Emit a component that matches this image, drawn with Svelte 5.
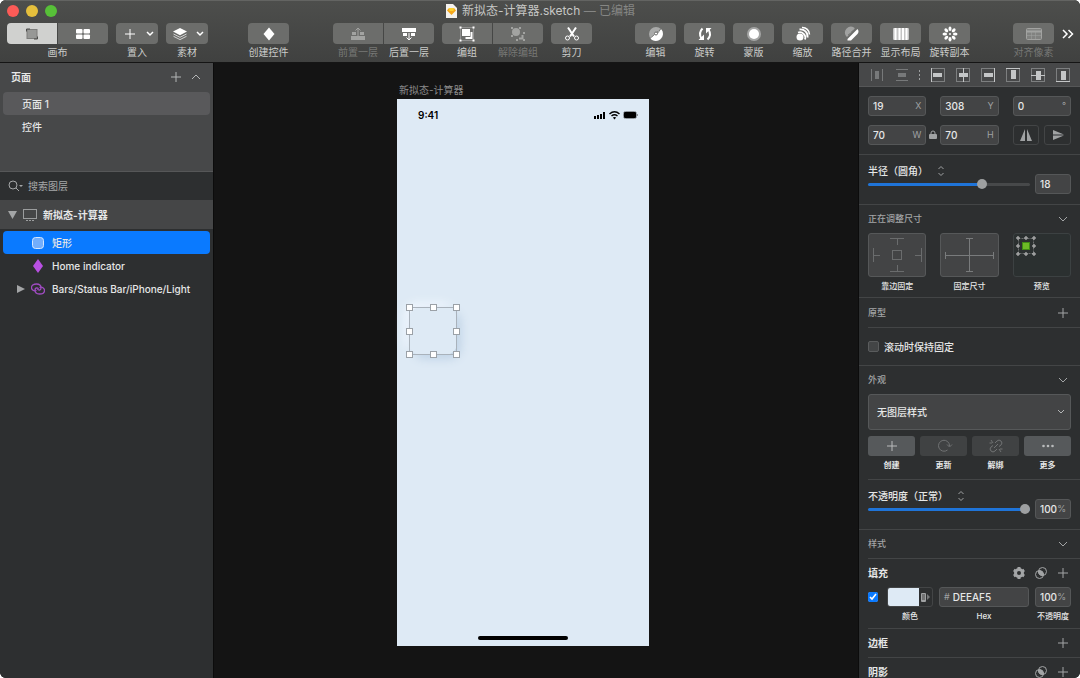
<script>
    // toolbar groups, the number in `space` is how much room is left before the group
    const toolGroups = [
        { space: 40, tools: [{ icon: 'symbol', label: '创建控件' }] },
        {
            space: 44,
            tools: [
                { icon: 'forward', label: '前置一层', side: 'left', off: true },
                { icon: 'backward', label: '后置一层', side: 'right' },
                { icon: 'group', label: '编组', side: 'left' },
                { icon: 'ungroup', label: '解除编组', side: 'right', off: true },
                { icon: 'scissors', label: '剪刀' }
            ]
        },
        {
            space: 43,
            tools: [
                { icon: 'edit', label: '编辑' },
                { icon: 'rotate', label: '旋转' },
                { icon: 'mask', label: '蒙版' },
                { icon: 'scale', label: '缩放' },
                { icon: 'flatten', label: '路径合并' },
                { icon: 'layout', label: '显示布局' },
                { icon: 'copies', label: '旋转副本' }
            ]
        },
        { space: 43, tools: [{ icon: 'pixel', label: '对齐像素', off: true }] }
    ];

    const aligns = ['left', 'center', 'right', 'top', 'middle', 'bottom'];

    const styleActions = [
        { icon: 'plus', label: '创建', on: true },
        { icon: 'refresh', label: '更新' },
        { icon: 'unlink', label: '解绑' },
        { icon: 'more', label: '更多', on: true }
    ];

    const handles = ['nw', 'n', 'ne', 'w', 'e', 'sw', 's', 'se'];

    let page = $state('页面 1');
    let layer = $state('矩形');
    let x = $state('19');
    let y = $state('308');
    let angle = $state('0');
    let w = $state('70');
    let h = $state('70');
    let radius = $state(18);
    let opacity = $state(100);
    let fillOn = $state(true);
    let sticky = $state(false);
    let hex = $state('DEEAF5');
    let fillOpacity = $state('100');
</script>

{#snippet icon(name)}
    <svg class="icon" width="18" height="16" viewBox="0 0 18 16" fill="none" stroke="currentColor" aria-hidden="true">
        {#if name === 'canvas'}
            <rect x="4" y="3.500" width="10" height="9" fill="#979896" stroke="#7c7d7b" />
            <path d="M3.500 5.500V3H7M14.500 10.500V13H11" stroke="#4c4d4b" />
        {:else if name === 'grid'}
            <g fill="currentColor" stroke="none">
                <rect x="2" y="3" width="6.500" height="4.500" rx="1" /><rect x="9.500" y="3" width="6.500" height="4.500" rx="1" />
                <rect x="2" y="8.500" width="6.500" height="4.500" rx="1" /><rect x="9.500" y="8.500" width="6.500" height="4.500" rx="1" />
            </g>
        {:else if name === 'plus'}
            <path d="M9 3v10M4 8h10" />
        {:else if name === 'stack'}
            <path d="M9 2l7 3.600L9 9.200 2 5.600z" fill="currentColor" stroke="none" />
            <path d="M2.500 8L9 11.300 15.500 8M2.500 10.300L9 13.600l6.500-3.300" stroke-opacity=".7" />
        {:else if name === 'symbol'}
            <path d="M9 1.500L14.500 8 9 14.500 3.500 8z" fill="currentColor" stroke="none" />
        {:else if name === 'forward'}
            <path d="M2 10h14v4H2zM3 6h4v3H3zM11 6h4v3h-4z" fill="currentColor" stroke="none" />
            <path d="M9 10V2M6.500 4.500L9 2l2.500 2.500" />
        {:else if name === 'backward'}
            <path d="M2 2h14v4H2zM3 7h4v3H3zM11 7h4v3h-4z" fill="currentColor" stroke="none" />
            <path d="M9 7v7M6.500 11.500L9 14l2.500-2.500" />
        {:else if name === 'group'}
            <rect x="2.500" y="1.500" width="13" height="13" stroke-dasharray="1 1" stroke-opacity=".5" />
            <path d="M4 3h8v7H4z" fill="currentColor" stroke="none" />
            <path d="M13.500 6v6h-6" stroke-width="2" />
            <path d="M1.500 .500h2v2h-2zM14.500 .500h2v2h-2zM1.500 13.500h2v2h-2zM14.500 13.500h2v2h-2z" fill="currentColor" stroke="none" />
        {:else if name === 'ungroup'}
            <path d="M2 1h2v2H2zM10 1h2v2h-2zM2 9h2v2H2zM7 13h2v2H7zM14 6h2v2h-2zM14 13h2v2h-2z" fill="currentColor" stroke="none" />
            <circle cx="7" cy="6" r="4" fill="currentColor" stroke="none" />
            <path d="M13.500 9v3.500H10" stroke-width="2" />
        {:else if name === 'scissors'}
            <path d="M5 1.500l6 9M13 1.500l-6 9" stroke-width="2" />
            <circle cx="4.500" cy="12" r="2" /><circle cx="13.500" cy="12" r="2" />
        {:else if name === 'edit'}
            <circle cx="9" cy="8" r="7" fill="#a9aaa9" stroke="none" />
            <path d="M14.500 3.500A7 7 0 0 1 3 12C6 12 6 8 9.500 8S12 4 14.500 3.500z" fill="currentColor" stroke="none" />
            <path d="M3 12.500L14.500 2.500" stroke="#6c6d6b" stroke-dasharray="2 1" />
            <circle cx="9" cy="7.500" r="1.500" fill="#fff" stroke="#6c6d6b" />
        {:else if name === 'rotate'}
            <path d="M6.500 2.500Q2 7 5.500 12.500M11.500 13.500q4.500-4.500 1-10" stroke-width="2" />
            <path d="M2.500 14H8V8.500zM15.500 2H10v5.500z" fill="currentColor" stroke="none" />
        {:else if name === 'mask'}
            <circle cx="9" cy="8" r="7" fill="#a4a5a4" stroke="none" /><circle cx="9" cy="8" r="5" fill="currentColor" stroke="none" />
        {:else if name === 'scale'}
            <circle cx="6" cy="11" r="3.500" fill="currentColor" stroke="none" />
            <path d="M4 6.500a5.500 5.500 0 0 1 7 7" stroke-width="1.800" />
            <path d="M5.500 3.500a7 7 0 0 1 8 8" stroke-width="1.800" />
            <path d="M8 1.500a7 7 0 0 1 7.500 7" stroke-width="1.500" />
        {:else if name === 'flatten'}
            <path d="M3 10a6 6 0 0 1 8-8.500l1 1-8 8.500z" fill="#a1a2a1" stroke="none" />
            <path d="M14.500 3q2 2.500 0 5L8 14.500H4.500V13z" fill="currentColor" stroke="none" />
            <path d="M5 9L12 2.500" stroke="#6c6d6b" stroke-dasharray="1 1" />
        {:else if name === 'layout'}
            <rect x="1" y="2" width="16" height="12" rx="1" fill="currentColor" fill-opacity=".6" stroke="none" />
            <path d="M3.500 2v12M7.500 2v12M11 2v12M14.500 2v12" stroke-width="2" />
        {:else if name === 'copies'}
            <g fill="currentColor" stroke="none">
                {#each [0, 45, 90, 135, 180, 225, 270, 315] as turn}
                    <ellipse cx="9" cy="2.800" rx="1.500" ry="2.300" transform="rotate({turn} 9 8)" />
                {/each}
                <circle cx="9" cy="8" r="1" />
            </g>
        {:else if name === 'pixel'}
            <rect x="1.500" y="2.500" width="15" height="11" rx="1" fill="currentColor" fill-opacity=".4" />
            <path d="M2 5.500h14" stroke-width="2" />
            <path d="M6.500 6v7M10.500 6v7M2 9.500h14" stroke-opacity=".5" />
        {:else if name === 'refresh'}
            <path d="M12.500 12A5.500 5.500 0 1 1 14.500 8M12 6.500L14.500 9 17 6.500" />
        {:else if name === 'unlink'}
            <path d="M8 5l2-2a2.500 2.500 0 0 1 4 4l-2 1.500M10 11l-2 2a2.500 2.500 0 0 1-4-4l2-1.500M4 2l2 3M2.500 5H5M14 14l-2-3M15.500 11H13M7 10l4-4" />
        {:else if name === 'more'}
            <g fill="currentColor" stroke="none"><circle cx="4.500" cy="8" r="1.300" /><circle cx="9" cy="8" r="1.300" /><circle cx="13.500" cy="8" r="1.300" /></g>
        {:else if name === 'gear'}
            <circle cx="9" cy="8" r="3.500" stroke-width="3" />
            <path d="M9 2v2M9 12v2M3.800 5l1.700 1M12.500 10l1.700 1M3.800 11l1.700-1M12.500 6l1.700-1" stroke-width="3" />
        {:else if name === 'blend'}
            <circle cx="7.500" cy="9.500" r="4" /><circle cx="10.500" cy="6.500" r="4" />
            <path d="M6.500 6a4 4 0 0 0 5 4.500A4 4 0 0 0 6.500 6z" fill="currentColor" />
        {:else if name === 'chevron'}
            <path d="M5 6l4 4 4-4" />
        {:else if name === 'chevron-up'}
            <path d="M5 10l4-4 4 4" />
        {:else if name === 'updown'}
            <path d="M6.500 6L9 3.500 11.500 6M6.500 10L9 12.500 11.500 10" />
        {:else if name === 'flip-h'}
            <path d="M8 2v12H3zM10 2v12h5z" fill="currentColor" stroke="none" />
        {:else if name === 'flip-v'}
            <path d="M4 3v4.500h11zM4 13V8.500h11z" fill="currentColor" stroke="none" />
        {/if}
    </svg>
{/snippet}

{#snippet alignIcon(name)}
    <svg width="16" height="16" viewBox="0 0 16 16" fill="none" stroke="#c4c6c7" aria-hidden="true">
        <rect x="1.500" y="1.500" width="13" height="13" stroke="#7d7f80" />
        {#if name === 'left'}
            <path d="M1.500 1v14" /><rect x="3" y="6" width="9" height="4" fill="#c4c6c7" stroke="none" />
        {:else if name === 'center'}
            <path d="M8.500 1v14" /><rect x="4" y="6" width="9" height="4" fill="#c4c6c7" stroke="none" />
        {:else if name === 'right'}
            <path d="M14.500 1v14" /><rect x="4" y="6" width="9" height="4" fill="#c4c6c7" stroke="none" />
        {:else if name === 'top'}
            <path d="M1 1.500h14" /><rect x="6" y="3" width="5" height="9" fill="#c4c6c7" stroke="none" />
        {:else if name === 'middle'}
            <path d="M1 8.500h14" /><rect x="6" y="4" width="5" height="9" fill="#c4c6c7" stroke="none" />
        {:else}
            <path d="M1 14.500h14" /><rect x="6" y="4" width="5" height="9" fill="#c4c6c7" stroke="none" />
        {/if}
    </svg>
{/snippet}

<div class="window">
    <header>
        <div class="titlebar">
            <div class="lights">
                <button class="light red" aria-label="关闭"></button>
                <button class="light yellow" aria-label="最小化"></button>
                <button class="light green" aria-label="全屏"></button>
            </div>
            <h1>
                <svg width="12" height="14" viewBox="0 0 12 14" aria-hidden="true">
                    <path d="M1 0h7l4 4v10H1z" fill="#f4f2ee" />
                    <path d="M4 4h5l2 2.500-4.500 4.500L2 6.500z" fill="#f6a81c" />
                    <path d="M4 4h5L8.500 7h-4z" fill="#fdd231" />
                </svg>
                <span>新拟态-计算器.sketch <span class="edited">— 已编辑</span></span>
            </h1>
            <div class="lights-end"></div>
        </div>

        <div class="toolbar">
            <div class="tools">
                <div class="tool views">
                    <div class="faces">
                        <button class="face left active" aria-label="画布">{@render icon('canvas')}</button>
                        <button class="face right" aria-label="控件">{@render icon('grid')}</button>
                    </div>
                    <span>画布</span>
                </div>
                <button class="tool drop">
                    <span class="face">
                        {@render icon('plus')}
                        <svg class="arrow" width="8" height="6" viewBox="0 0 8 6" aria-hidden="true"><path d="M1 1l3 3 3-3" /></svg>
                    </span>
                    <span>置入</span>
                </button>
                <button class="tool drop">
                    <span class="face">
                        {@render icon('stack')}
                        <svg class="arrow" width="8" height="6" viewBox="0 0 8 6" aria-hidden="true"><path d="M1 1l3 3 3-3" /></svg>
                    </span>
                    <span>素材</span>
                </button>
            </div>
            {#each toolGroups as group}
                <div class="space" style:flex-grow={group.space}></div>
                <div class="tools">
                    {#each group.tools as tool}
                        <button class="tool {tool.side ?? ''}" disabled={tool.off}>
                            <span class="face {tool.side ?? ''}">{@render icon(tool.icon)}</span>
                            <span>{tool.label}</span>
                        </button>
                    {/each}
                </div>
            {/each}
            <button class="overflow" aria-label="更多工具">
                <svg width="12" height="10" viewBox="0 0 12 10" aria-hidden="true"><path d="M1 1l4 4-4 4M6.500 1l4 4-4 4" /></svg>
            </button>
        </div>
    </header>

    <div class="body">
        <aside class="sidebar">
            <section class="pages">
                <div class="pages-head">
                    <h2>页面</h2>
                    <button aria-label="新建页面">{@render icon('plus')}</button>
                    <button aria-label="收起">{@render icon('chevron-up')}</button>
                </div>
                {#each ['页面 1', '控件'] as name}
                    <button class="row page" class:current={page === name} onclick={() => (page = name)}>{name}</button>
                {/each}
            </section>

            <label class="search">
                <svg width="16" height="12" viewBox="0 0 16 12" aria-hidden="true">
                    <circle cx="5" cy="5" r="4" fill="none" stroke="#a5a7a8" />
                    <path d="M8 8l3 3" stroke="#a5a7a8" /><path d="M11 5h4l-2 2z" fill="#a5a7a8" />
                </svg>
                <input type="text" placeholder="搜索图层" aria-label="搜索图层" />
            </label>

            <button class="artboard-row">
                <svg width="9" height="8" viewBox="0 0 9 8" aria-hidden="true"><path d="M0 0h9L4.500 8z" fill="#a3a5a6" /></svg>
                <svg width="16" height="14" viewBox="0 0 16 14" fill="none" stroke="#9b9d9e" aria-hidden="true">
                    <rect x="1.500" y="1.500" width="13" height="9" /><path d="M4 12.500h8" stroke-dasharray="2 1" />
                </svg>
                新拟态-计算器
            </button>

            <div class="layers">
                <button class="row layer" class:selected={layer === '矩形'} onclick={() => (layer = '矩形')}>
                    <span class="twist"></span>
                    <svg width="14" height="14" viewBox="0 0 14 14" aria-hidden="true">
                        <rect x="1.500" y="1.500" width="11" height="11" rx="3" fill="#73aefc" stroke="#d5e7ff" />
                    </svg>
                    矩形
                </button>
                <button class="row layer" class:selected={layer === 'home'} onclick={() => (layer = 'home')}>
                    <span class="twist"></span>
                    <svg width="14" height="14" viewBox="0 0 14 14" aria-hidden="true"><path d="M7 0l5 7-5 7-5-7z" fill="#b950e3" /></svg>
                    Home indicator
                </button>
                <button class="row layer" class:selected={layer === 'bars'} onclick={() => (layer = 'bars')}>
                    <span class="twist">
                        <svg width="8" height="8" viewBox="0 0 8 8" aria-hidden="true"><path d="M0 0l8 4-8 4z" fill="#a3a5a6" /></svg>
                    </span>
                    <svg width="14" height="14" viewBox="0 0 14 14" fill="none" stroke="#a04cc2" stroke-width="1.300" aria-hidden="true">
                        <path d="M5.500 8.500C3 9.500.500 8 .500 5.500S3 2 5.500 2s4.500 1.500 4.500 4-2.500 2.500-3.500 1" />
                        <path d="M8.500 5.500c2.500-1 5 .500 5 3s-2.500 3.500-5 3.500S4 10.500 4 8s2.500-2.500 3.500-1" />
                    </svg>
                    Bars/Status Bar/iPhone/Light
                </button>
            </div>
        </aside>

        <main>
            <div class="artboard">
                <span class="artboard-name">新拟态-计算器</span>
                <div class="phone-bar">
                    <strong>9:41</strong>
                    <svg width="44" height="10" viewBox="0 0 44 10" fill="#000" aria-hidden="true">
                        <path d="M0 6h2v3H0zM3 5h2v4H3zM6 4h2v5H6zM9 2h2v7H9z" />
                        <path d="M15.500 4q5-4.500 10 0M17.500 6q3-2.500 6 0" fill="none" stroke="#000" stroke-width="1.500" />
                        <path d="M18.800 7.500q1.700-1.200 3.400 0L20.500 9.500z" />
                        <rect x="29.500" y="1.500" width="13" height="7" rx="2" fill="none" stroke="#8f969d" />
                        <rect x="30" y="2" width="12" height="6" rx="1" /><path d="M43 4h1v2h-1z" fill="#8f969d" />
                    </svg>
                </div>
                <div class="shape">
                    <div class="bounds">
                        {#each handles as handle}
                            <i class={handle}></i>
                        {/each}
                    </div>
                </div>
                <div class="home"></div>
            </div>
        </main>

        <aside class="inspector">
            <div class="aligns">
                <button aria-label="水平分布" disabled>
                    <svg width="16" height="16" viewBox="0 0 16 16" aria-hidden="true"><path d="M2 2h1v12H2zM13 2h1v12h-1zM6 4h4v8H6z" fill="#77797a" /></svg>
                </button>
                <button aria-label="垂直分布" disabled>
                    <svg width="16" height="16" viewBox="0 0 16 16" aria-hidden="true"><path d="M2 2h12v1H2zM2 13h12v1H2zM4 6h8v4H4z" fill="#77797a" /></svg>
                </button>
                <span class="dots"><svg width="1" height="12" viewBox="0 0 1 12" aria-hidden="true"><path d="M0 1h1v2H0zM0 5h1v2H0zM0 9h1v2H0z" fill="#9d9fa0" /></svg></span>
                {#each aligns as name}
                    <button aria-label={name}>{@render alignIcon(name)}</button>
                {/each}
            </div>

            <section class="geometry">
                <div class="triple">
                    <label class="field"><input type="text" bind:value={x} /><span>X</span></label>
                    <i></i>
                    <label class="field"><input type="text" bind:value={y} /><span>Y</span></label>
                    <i></i>
                    <label class="field"><input type="text" bind:value={angle} /><span>°</span></label>
                </div>
                <div class="triple">
                    <label class="field"><input type="text" bind:value={w} /><span>W</span></label>
                    <button class="lock" aria-label="锁定比例">
                        <svg width="8" height="10" viewBox="0 0 8 10" aria-hidden="true">
                            <path d="M2 5V3a2 2 0 0 1 4 0v2" fill="none" stroke="#a0a2a3" /><rect x="0" y="4" width="8" height="5" rx="1" fill="#a0a2a3" />
                        </svg>
                    </button>
                    <label class="field"><input type="text" bind:value={h} /><span>H</span></label>
                    <i></i>
                    <div class="flips">
                        <button aria-label="水平翻转">{@render icon('flip-h')}</button>
                        <button aria-label="垂直翻转">{@render icon('flip-v')}</button>
                    </div>
                </div>
            </section>

            <section class="slider">
                <div class="slide">
                    <label for="radius">半径（圆角） {@render icon('updown')}</label>
                    <input id="radius" type="range" min="0" max="25" bind:value={radius} style:--fill="{(radius / 25) * 100}%" />
                </div>
                <label class="field"><input type="text" aria-label="半径" bind:value={radius} /></label>
            </section>

            <section>
                <div class="head">
                    <h3>正在调整尺寸</h3>
                    <button aria-label="收起">{@render icon('chevron')}</button>
                </div>
                <div class="boxes">
                    <div>
                        <button class="box" aria-label="靠边固定">
                            <svg width="56" height="42" viewBox="0 0 56 42" fill="none" stroke="#6a6c6d" aria-hidden="true">
                                <rect x="23.500" y="16.500" width="9" height="9" />
                                <path d="M21 4.500h14M28.500 5v6M21 37.500h14M28.500 31v6M4.500 14v14M5 21.500h6M52.500 14v14M46 21.500h6" />
                            </svg>
                        </button>
                        <span>靠边固定</span>
                    </div>
                    <div>
                        <button class="box" aria-label="固定尺寸">
                            <svg width="56" height="42" viewBox="0 0 56 42" fill="none" stroke="#797b7c" aria-hidden="true">
                                <path d="M28.500 4v34M4 21.500h48M25 4.500h7M25 37.500h7M4.500 18v7M52.500 18v7" />
                            </svg>
                        </button>
                        <span>固定尺寸</span>
                    </div>
                    <div>
                        <div class="box preview">
                            <svg width="56" height="42" viewBox="0 0 56 42" aria-hidden="true">
                                <rect x="4.500" y="4.500" width="15" height="15" fill="none" stroke="#6c6e6f" stroke-dasharray="2 1" />
                                <rect x="8.500" y="8.500" width="7" height="7" fill="#6cbb26" stroke="#3f8a14" />
                                <g fill="#2d2f30" stroke="#d8d8d8">
                                    {#each [[4, 4], [12, 4], [20, 4], [4, 12], [20, 12], [4, 20], [12, 20], [20, 20]] as [cx, cy]}
                                        <circle {cx} {cy} r="1.200" />
                                    {/each}
                                </g>
                            </svg>
                        </div>
                        <span>预览</span>
                    </div>
                </div>
            </section>

            <section>
                <div class="head tall">
                    <h3>原型</h3>
                    <button aria-label="添加原型">{@render icon('plus')}</button>
                </div>
            </section>

            <section class="inset">
                <label class="sticky"><input type="checkbox" bind:checked={sticky} />滚动时保持固定</label>
            </section>

            <section>
                <div class="head">
                    <h3>外观</h3>
                    <button aria-label="收起">{@render icon('chevron')}</button>
                </div>
                <div class="picker">
                    <select aria-label="图层样式"><option>无图层样式</option></select>
                    <svg width="8" height="6" viewBox="0 0 8 6" aria-hidden="true"><path d="M1 1l3 3 3-3" /></svg>
                </div>
                <div class="actions">
                    {#each styleActions as action}
                        <button class:on={action.on}>
                            <span class="pad">{@render icon(action.icon)}</span>
                            <span>{action.label}</span>
                        </button>
                    {/each}
                </div>
            </section>

            <section class="inset slider">
                <div class="slide">
                    <label for="opacity">不透明度（正常） {@render icon('updown')}</label>
                    <input id="opacity" type="range" min="0" max="100" bind:value={opacity} style:--fill="{opacity}%" />
                </div>
                <label class="field percent"><input type="text" aria-label="不透明度" bind:value={opacity} /><span>%</span></label>
            </section>

            <section>
                <div class="head">
                    <h3>样式</h3>
                    <button aria-label="收起">{@render icon('chevron')}</button>
                </div>
            </section>

            <section class="inset">
                <div class="head">
                    <h4>填充</h4>
                    <button aria-label="填充选项">{@render icon('gear')}</button>
                    <button aria-label="混合模式">{@render icon('blend')}</button>
                    <button aria-label="添加填充">{@render icon('plus')}</button>
                </div>
                <div class="fill">
                    <input type="checkbox" aria-label="启用填充" bind:checked={fillOn} />
                    <div>
                        <button class="swatch" aria-label="颜色">
                            <span class="color" style:background="#{hex}"></span>
                            <svg width="13" height="18" viewBox="0 0 13 18" aria-hidden="true">
                                <rect x="2" y="5" width="5" height="9" rx="1" fill="#a0a2a3" />
                                <path d="M3 7h3M3 9h3M3 11h3" stroke="#444" /><path d="M8 6l3 3-3 3z" fill="#77797a" />
                            </svg>
                        </button>
                        <span>颜色</span>
                    </div>
                    <label>
                        <span class="field hex"><span>#</span><input type="text" bind:value={hex} /></span>
                        <span>Hex</span>
                    </label>
                    <label>
                        <span class="field percent"><input type="text" bind:value={fillOpacity} /><span>%</span></span>
                        <span>不透明度</span>
                    </label>
                </div>
            </section>

            <section class="inset">
                <div class="head">
                    <h4>边框</h4>
                    <button aria-label="添加边框">{@render icon('plus')}</button>
                </div>
            </section>

            <section class="inset">
                <div class="head">
                    <h4>阴影</h4>
                    <button aria-label="混合模式">{@render icon('blend')}</button>
                    <button aria-label="添加阴影">{@render icon('plus')}</button>
                </div>
            </section>
        </aside>
    </div>
</div>

<style>
    :global(body) {
        background: #fff;
    }

    * {
        box-sizing: border-box;
        margin: 0;
    }

    .window {
        display: flex;
        flex-direction: column;
        height: 100vh;
        overflow: hidden;
        border-radius: 6px;
        background: #141414;
        color: #e6e7e7;
        font: 10px/14px Inter, "Noto Sans CJK SC", sans-serif;
    }

    button,
    input,
    select {
        border: 0;
        padding: 0;
        background: none;
        color: inherit;
        font: inherit;
    }

    button {
        display: flex;
        align-items: center;
        justify-content: center;
    }

    input {
        min-width: 0;
        outline: 0;
    }

    svg {
        display: block;
        flex: none;
    }

    /* title bar and toolbar */
    header {
        flex: none;
        height: 63px;
        background: linear-gradient(#4d4e4c, #404140);
        border-top: 1px solid #636462;
        border-bottom: 1px solid #151515;
    }

    .titlebar {
        display: flex;
        align-items: center;
        height: 19px;
        padding: 0 7px;
    }

    .lights,
    .lights-end {
        display: flex;
        flex: 1;
        gap: 7px;
    }

    .light {
        width: 12px;
        height: 12px;
        border-radius: 50%;
    }

    .red { background: #fc5b57; }
    .yellow { background: #e5bf3c; }
    .green { background: #57c038; }

    h1 {
        display: flex;
        align-items: center;
        gap: 5px;
        font-size: 12px;
        font-weight: 400;
        color: #c6c7c5;
    }

    .edited {
        color: #858684;
    }

    .toolbar {
        display: flex;
        align-items: flex-start;
        padding: 3px 6px 0 7px;
    }

    .space {
        flex: 1 1 0;
    }

    .tools {
        display: flex;
        gap: 8px;
    }

    .tool {
        display: flex;
        flex-direction: column;
        align-items: center;
        justify-content: flex-start;
        width: 41px;
        gap: 1px;
        white-space: nowrap;
        color: #cbccca;
    }

    .tool.views {
        width: 101px;
    }

    .tool.drop {
        width: 42px;
    }

    .tool.left,
    .tool.right {
        width: 50px;
    }

    .tool.left {
        margin-right: -7px;
    }

    .faces {
        display: flex;
        gap: 1px;
        width: 100%;
    }

    .face {
        display: flex;
        align-items: center;
        justify-content: center;
        width: 100%;
        height: 21px;
        border-radius: 4px;
        background: #6c6d6b;
        color: #fff;
    }

    .face.left {
        border-radius: 4px 0 0 4px;
    }

    .face.right {
        border-radius: 0 4px 4px 0;
    }

    .face.active {
        background: #d0d1cf;
    }

    .drop .face {
        justify-content: space-between;
        padding: 0 4px 0 5px;
    }

    .arrow,
    .picker svg,
    .overflow svg {
        fill: none;
        stroke: #fff;
        stroke-width: 1.5;
    }

    .tool:disabled {
        color: #777876;
    }

    .tool:disabled .face {
        color: #a2a3a1;
    }

    .overflow {
        height: 21px;
        margin-left: 8px;
    }

    .body {
        display: flex;
        flex: 1;
        min-height: 0;
    }

    /* pages and layers */
    .sidebar {
        flex: none;
        width: 214px;
        background: #2d2f30;
        border-right: 1px solid #0c0c0c;
    }

    .pages {
        height: 109px;
        background: #474849;
        border-bottom: 1px solid #565758;
    }

    .pages-head {
        display: flex;
        align-items: center;
        height: 27px;
        margin-bottom: 2px;
        padding: 0 8px 0 11px;
        gap: 2px;
        color: #b4b6b7;
    }

    h2 {
        flex: 1;
        font-size: 10px;
        font-weight: 700;
        color: #e6e7e7;
    }

    .row {
        justify-content: flex-start;
        width: calc(100% - 6px);
        height: 23px;
        margin: 0 3px;
        border-radius: 4px;
        font-weight: 500;
    }

    .page {
        padding-left: 19px;
    }

    .page.current {
        background: #59595b;
    }

    .search {
        display: flex;
        align-items: center;
        gap: 4px;
        height: 28px;
        padding-left: 8px;
    }

    .search input {
        flex: 1;
    }

    .search input::placeholder {
        color: #a5a7a8;
        opacity: 1;
    }

    .artboard-row {
        justify-content: flex-start;
        gap: 5px;
        width: 100%;
        height: 29px;
        padding-left: 8px;
        background: #454647;
        font-weight: 700;
    }

    .layers {
        padding-top: 2px;
    }

    .layer {
        gap: 7px;
        padding-left: 14px;
    }

    .layer.selected {
        background: #0a7aff;
    }

    .twist {
        width: 7px;
    }

    /* canvas */
    main {
        position: relative;
        flex: 1;
        overflow: hidden;
    }

    .artboard {
        position: absolute;
        top: 36px;
        left: 183px;
        width: 252px;
        height: 547px;
        background: #deeaf5;
    }

    .artboard-name {
        position: absolute;
        bottom: 100%;
        left: 2px;
        margin-bottom: 2px;
        color: #8b8b8b;
    }

    .phone-bar {
        display: flex;
        align-items: center;
        justify-content: space-between;
        height: 32px;
        padding: 0 11px 0 21px;
        color: #000;
    }

    .phone-bar strong {
        font-weight: 600;
    }

    .shape {
        position: absolute;
        top: 208px;
        left: 12px;
        width: 48px;
        height: 48px;
        border-radius: 12px;
        background: #deeaf5;
        box-shadow: 4px 4px 10px #c0d3e6, -4px -4px 10px #f2f8ff;
    }

    .bounds {
        position: absolute;
        inset: 0;
        border: 1px solid #a9b2bb;
    }

    .bounds i {
        position: absolute;
        top: 20px;
        left: 20px;
        width: 7px;
        height: 7px;
        border: 1px solid #9ba1a7;
        background: #fff;
    }

    .bounds .nw, .bounds .n, .bounds .ne { top: -4px; }
    .bounds .sw, .bounds .s, .bounds .se { top: 43px; }
    .bounds .nw, .bounds .w, .bounds .sw { left: -4px; }
    .bounds .ne, .bounds .e, .bounds .se { left: 43px; }

    .home {
        position: absolute;
        bottom: 6px;
        left: 81px;
        width: 90px;
        height: 4px;
        border-radius: 2px;
        background: #000;
    }

    /* inspector */
    .inspector {
        flex: none;
        width: 222px;
        overflow: hidden;
        background: #2d2f30;
        border-left: 1px solid #0c0c0c;
    }

    .aligns {
        display: flex;
        height: 24px;
        padding-left: 5px;
        background: #474849;
        border-bottom: 1px solid #565758;
    }

    .aligns button {
        width: 25px;
    }

    .dots {
        display: flex;
        align-items: center;
        justify-content: center;
        width: 11px;
    }

    .inspector section {
        padding: 0 9px;
    }

    .inspector section + section {
        border-top: 1px solid #434546;
    }

    .inspector section.inset {
        margin-left: 9px;
        padding-left: 0;
    }

    .inspector .geometry {
        display: grid;
        gap: 9px;
        padding: 9px;
    }

    .triple {
        display: grid;
        grid-template-columns: 1fr 14px 1fr 14px 1fr;
    }

    .field {
        display: flex;
        align-items: center;
        height: 20px;
        padding: 0 4px;
        border: 1px solid #555758;
        border-radius: 3px;
        background: #434445;
        font-weight: 500;
    }

    .field input {
        flex: 1;
        width: 0;
    }

    .field span {
        color: #9fa1a2;
        font-size: 9px;
        font-weight: 400;
    }

    .flips {
        display: grid;
        grid-template-columns: 1fr 1fr;
        gap: 5px;
        color: #a0a2a3;
    }

    .flips button {
        border: 1px solid #434546;
        border-radius: 3px;
    }

    .inspector .slider {
        display: grid;
        grid-template-columns: 1fr 36px;
        gap: 5px;
        padding-top: 8px;
        padding-bottom: 10px;
    }

    .slider .field {
        margin-top: 11px;
    }

    .slide label {
        display: flex;
        align-items: center;
        gap: 4px;
        height: 15px;
        font-weight: 500;
    }

    .slide .icon {
        color: #a0a2a3;
    }

    .slide label :global(svg) {
        color: #a0a2a3;
    }

    input[type="range"] {
        appearance: none;
        display: block;
        width: 100%;
        height: 12px;
    }

    input[type="range"]::-webkit-slider-runnable-track {
        height: 3px;
        border-radius: 2px;
        background: linear-gradient(to right, #1f74d8 var(--fill), #47494a var(--fill));
    }

    input[type="range"]::-webkit-slider-thumb {
        appearance: none;
        width: 10px;
        height: 10px;
        margin-top: -4px;
        border-radius: 50%;
        background: #9ea0a1;
    }

    .head {
        display: flex;
        align-items: center;
        gap: 4px;
        height: 28px;
        color: #a3a5a6;
    }

    .head.tall {
        height: 29px;
    }

    .head button:last-child {
        margin-right: -1px;
    }

    h3,
    h4 {
        flex: 1;
        font-size: 9px;
        font-weight: 500;
    }

    h4 {
        color: #e6e7e7;
        font-size: 10px;
        font-weight: 700;
        line-height: 10px;
    }

    .boxes {
        display: grid;
        grid-template-columns: repeat(3, 1fr);
        gap: 14px;
        padding-bottom: 2px;
        font-size: 8px;
        font-weight: 500;
        line-height: 18px;
        text-align: center;
    }

    .box {
        width: 100%;
        height: 44px;
        border: 1px solid #565859;
        border-radius: 3px;
        background: #434445;
    }

    .box.preview {
        border-color: #3c4142;
        background: #2b3030;
    }

    .sticky {
        display: flex;
        align-items: center;
        gap: 5px;
        height: 37px;
        font-weight: 500;
    }

    .sticky input {
        appearance: none;
        width: 11px;
        height: 11px;
        border: 1px solid #5a5c5d;
        border-radius: 2px;
        background: #434546;
    }

    .picker {
        display: grid;
        align-items: center;
    }

    .picker select,
    .picker svg {
        grid-area: 1 / 1;
    }

    .picker select {
        appearance: none;
        height: 36px;
        padding: 0 8px;
        border: 1px solid #565859;
        border-radius: 3px;
        background: #434445;
        font-weight: 500;
    }

    .picker svg {
        justify-self: end;
        margin-right: 6px;
        stroke: #b4b6b7;
        stroke-width: 1;
        pointer-events: none;
    }

    .actions {
        display: grid;
        grid-template-columns: repeat(4, 1fr);
        gap: 5px;
        padding: 6px 0 5px;
    }

    .actions button {
        flex-direction: column;
        font-size: 8px;
        font-weight: 700;
        line-height: 18px;
    }

    .pad {
        display: flex;
        align-items: center;
        justify-content: center;
        width: 100%;
        height: 20px;
        border-radius: 3px;
        background: #404243;
        color: #707273;
    }

    .on .pad {
        background: #56595b;
        color: #b9bbbc;
    }

    .fill {
        display: grid;
        grid-template-columns: 13px 1fr 90px 36px;
        gap: 6px;
        padding-bottom: 3px;
        font-size: 8px;
        font-weight: 500;
        line-height: 18px;
        text-align: center;
        white-space: nowrap;
    }

    .fill > input {
        width: 10px;
        height: 10px;
        margin-top: 5px;
        accent-color: #0a7aff;
    }

    .fill > div,
    .fill > label {
        display: flex;
        flex-direction: column;
    }

    .fill .field {
        font-size: 10px;
    }

    .swatch {
        height: 20px;
        border: 1px solid #434546;
        border-radius: 3px;
        overflow: hidden;
    }

    .color {
        flex: 1;
        align-self: stretch;
    }

    .hex input {
        padding-left: 3px;
    }
</style>
